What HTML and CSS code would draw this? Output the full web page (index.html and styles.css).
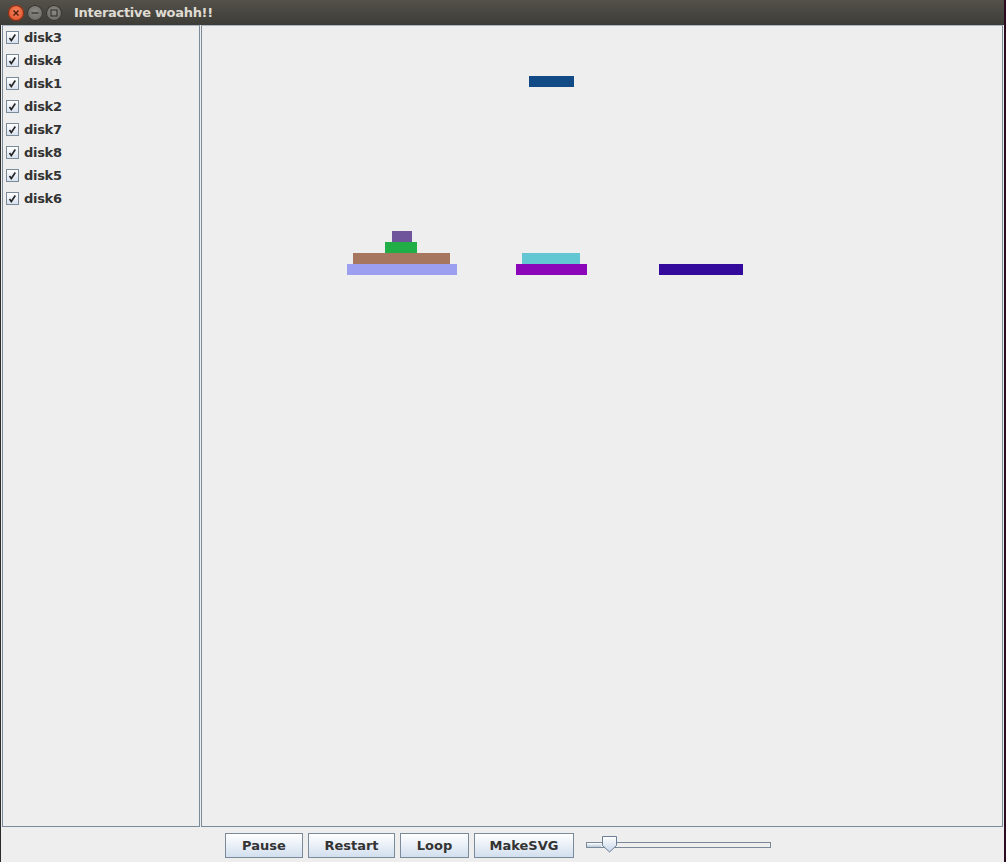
FILE: index.html
```html
<!DOCTYPE html>
<html>
<head>
<meta charset="utf-8">
<link rel="stylesheet" href="styles.css">
</head>
<body>
<div class="window">
  <div class="titlebar">
    <div class="wbtns">
      <span class="wbtn close"><svg width="16" height="16" viewBox="0 0 16 16"><path d="M5.5 5.5l5 5M10.5 5.5l-5 5" stroke="#4a1a0a" stroke-width="1.4"/></svg></span>
      <span class="wbtn"><svg width="16" height="16" viewBox="0 0 16 16"><path d="M4.5 8h7" stroke="#3a3935" stroke-width="1.4"/></svg></span>
      <span class="wbtn"><svg width="16" height="16" viewBox="0 0 16 16"><rect x="5" y="5" width="6" height="6" fill="none" stroke="#3a3935" stroke-width="1.2"/></svg></span>
    </div>
    <div class="title">Interactive woahh!!</div>
  </div>
  <div class="body">
    <div class="panels">
      <div class="list">
        <label class="item"><span class="cb"><svg width="13" height="13" viewBox="0 0 13 13"><path d="M3.5 7l1.8 2.5 4-6" fill="none" stroke="#222" stroke-width="1.6"/></svg></span>disk3</label>
        <label class="item"><span class="cb"><svg width="13" height="13" viewBox="0 0 13 13"><path d="M3.5 7l1.8 2.5 4-6" fill="none" stroke="#222" stroke-width="1.6"/></svg></span>disk4</label>
        <label class="item"><span class="cb"><svg width="13" height="13" viewBox="0 0 13 13"><path d="M3.5 7l1.8 2.5 4-6" fill="none" stroke="#222" stroke-width="1.6"/></svg></span>disk1</label>
        <label class="item"><span class="cb"><svg width="13" height="13" viewBox="0 0 13 13"><path d="M3.5 7l1.8 2.5 4-6" fill="none" stroke="#222" stroke-width="1.6"/></svg></span>disk2</label>
        <label class="item"><span class="cb"><svg width="13" height="13" viewBox="0 0 13 13"><path d="M3.5 7l1.8 2.5 4-6" fill="none" stroke="#222" stroke-width="1.6"/></svg></span>disk7</label>
        <label class="item"><span class="cb"><svg width="13" height="13" viewBox="0 0 13 13"><path d="M3.5 7l1.8 2.5 4-6" fill="none" stroke="#222" stroke-width="1.6"/></svg></span>disk8</label>
        <label class="item"><span class="cb"><svg width="13" height="13" viewBox="0 0 13 13"><path d="M3.5 7l1.8 2.5 4-6" fill="none" stroke="#222" stroke-width="1.6"/></svg></span>disk5</label>
        <label class="item"><span class="cb"><svg width="13" height="13" viewBox="0 0 13 13"><path d="M3.5 7l1.8 2.5 4-6" fill="none" stroke="#222" stroke-width="1.6"/></svg></span>disk6</label>
      </div>
      <div class="canvas">
        <div class="disk" style="left:327px;top:50px;width:45px;background:#124a85"></div>
        <div class="disk" style="left:190px;top:205px;width:20px;background:#70549b"></div>
        <div class="disk" style="left:183px;top:216px;width:32px;background:#22ae46"></div>
        <div class="disk" style="left:151px;top:227px;width:97px;background:#a6765f"></div>
        <div class="disk" style="left:145px;top:238px;width:110px;background:#9c9ef0"></div>
        <div class="disk" style="left:320px;top:227px;width:58px;background:#62c7d2"></div>
        <div class="disk" style="left:314px;top:238px;width:71px;background:#8b06b8"></div>
        <div class="disk" style="left:457px;top:238px;width:84px;background:#330a9c"></div>
      </div>
    </div>
    <div class="controls">
      <button class="btn b-pause">Pause</button>
      <button class="btn b-restart">Restart</button>
      <button class="btn b-loop">Loop</button>
      <button class="btn b-svg">MakeSVG</button>
      <div class="slider">
        <div class="track"><div class="fill"></div></div>
        <svg class="thumb" width="16" height="17" viewBox="0 0 16 17"><defs><linearGradient id="tg" x1="0" y1="0" x2="0" y2="1"><stop offset="0" stop-color="#ffffff"/><stop offset="1" stop-color="#c6d6e8"/></linearGradient></defs><path d="M0.5 0.5h14v9l-7 6.5l-7-6.5z" fill="url(#tg)" stroke="#6d7f94"/></svg>
      </div>
    </div>
  </div>
</div>
</body>
</html>
```
FILE: styles.css
```css
html, body {
  margin: 0;
  padding: 0;
  background: #2a0b1f;
  width: 1006px;
  height: 862px;
  overflow: hidden;
}
.window {
  width: 1004px;
  height: 862px;
  display: flex;
  flex-direction: column;
  background: #eeeeee;
}
.titlebar {
  height: 25px;
  flex: none;
  background: linear-gradient(#54514b, #3d3c37);
  display: flex;
  align-items: center;
  box-sizing: border-box;
}
.wbtns {
  display: flex;
  gap: 3px;
  margin-left: 8px;
}
.wbtn {
  width: 16px;
  height: 16px;
  border-radius: 50%;
  background: radial-gradient(circle at 50% 40%, #8c8a84, #64625d);
  display: block;
  box-shadow: inset 0 0 0 1px #33322e;
}
.wbtn svg { display: block; }
.wbtn.close {
  background: radial-gradient(circle at 50% 40%, #f58360, #d9461c);
  box-shadow: inset 0 0 0 1px #7a2a10;
}
.title {
  margin-left: 12px;
  font-family: "DejaVu Sans", sans-serif;
  font-weight: bold;
  font-size: 13px;
  color: #dfdbd2;
  letter-spacing: -0.3px;
}
.body {
  flex: 1;
  display: flex;
  flex-direction: column;
  border-left: 1px solid #2a2a28;
}
.panels {
  height: 802px;
  display: flex;
  gap: 1px;
  padding-left: 1px;
}
.list {
  width: 198px;
  box-sizing: border-box;
  border: 1px solid #7a8a99;
  border-top-color: #a9b6c4;
  padding: 0 0 0 3px;
  display: flex;
  flex-direction: column;
}
.item {
  height: 23px;
  display: flex;
  align-items: center;
  font-family: "DejaVu Sans", sans-serif;
  font-weight: bold;
  font-size: 13px;
  color: #333333;
  letter-spacing: -0.3px;
}
.cb {
  width: 13px;
  height: 13px;
  box-sizing: border-box;
  border: 1px solid #7a8a99;
  background: linear-gradient(#ffffff, #d7e2ef);
  margin-right: 5px;
  display: block;
  position: relative;
}
.cb svg { position: absolute; left: -1px; top: -1px; }
.canvas {
  width: 802px;
  box-sizing: border-box;
  border: 1px solid #7a8a99;
  border-top-color: #a9b6c4;
  position: relative;
}
.disk {
  position: absolute;
  height: 11px;
}
.controls {
  flex: 1;
  display: flex;
  align-items: flex-start;
  padding: 6px 0 0 224px;
  gap: 5px;
}
.btn {
  height: 25px;
  box-sizing: border-box;
  border: 1px solid #7a8a99;
  background: linear-gradient(#ffffff, #d2dfee);
  font-family: "DejaVu Sans", sans-serif;
  font-weight: bold;
  font-size: 13px;
  color: #333333;
  padding: 0;
  margin: 0;
}
.b-pause { width: 78px; }
.b-restart { width: 87px; }
.b-loop { width: 69px; }
.b-svg { width: 100px; }
.slider {
  position: relative;
  width: 186px;
  height: 25px;
  margin-left: 7px;
}
.track {
  position: absolute;
  left: 0;
  top: 9px;
  width: 185px;
  height: 6px;
  box-sizing: border-box;
  border: 1px solid #7a8a99;
  background: #eeeeee;
}
.fill {
  width: 14px;
  height: 4px;
  background: linear-gradient(#ffffff, #b8c9dc);
}
.thumb {
  position: absolute;
  left: 16px;
  top: 3px;
}
```
